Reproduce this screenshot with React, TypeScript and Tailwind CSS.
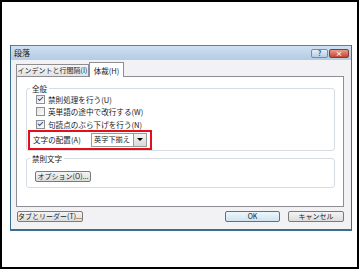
import { Check } from 'lucide-react';

const font = { fontFamily: '"Noto Sans CJK JP", "Liberation Sans", sans-serif' };

function CheckRow({ checked, label }: { checked: boolean; label: string }) {
  return (
    <div className="flex h-[12.5px] items-center gap-[3px] pl-[9px]">
      <span className="flex h-[9px] w-[9px] items-center justify-center border border-[#8e8f8f] bg-gradient-to-br from-[#e4e4e4] to-[#fbfbfb]">
        {checked && <Check size={8} strokeWidth={3.5} className="text-[#2a4a9a]" />}
      </span>
      <span className="whitespace-nowrap text-[7.6px] leading-[9px] text-[#1a1a1a]">{label}</span>
    </div>
  );
}

function Btn({ label, width, primary }: { label: string; width: string; primary?: boolean }) {
  return (
    <div
      className={`flex h-[11px] items-center justify-center whitespace-nowrap rounded-[2px] border bg-gradient-to-b text-[7px] leading-[9px] text-[#1a1a1a] ${width} ${
        primary ? 'border-[#3d7bad] from-[#eef6fb] to-[#cfe3f1]' : 'border-[#7a7a7a] from-[#f4f4f4] to-[#dcdcdc]'
      }`}
    >
      {label}
    </div>
  );
}

export default function App() {
  return (
    <div className="h-[270px] w-[360px] bg-white" style={font}>
      <div className="h-[269px] w-[359px] border-2 border-black pl-[8px] pt-[43px]">
        <div className="w-[342px] border-x border-b-2 border-[#39708f] bg-[#f2f1f4]">
          {/* title bar */}
          <div className="flex h-[15px] items-center justify-between border-t border-[#5b7f9c] bg-gradient-to-b from-[#cfe0f1] to-[#b3cbe5] pl-[3px] pr-[2px]">
            <span className="text-[8px] leading-[10px] text-[#1a1a1a]">段落</span>
            <div className="flex h-[9px] gap-[1px]">
              <div className="flex w-[17px] items-center justify-center rounded-[2px] border border-[#6f8fae] bg-gradient-to-b from-[#e4eef8] to-[#b6cde4] text-[7px] font-bold leading-none text-[#2f4f6f]">
                ?
              </div>
              <div className="flex w-[20px] items-center justify-center rounded-[2px] border border-[#8a3b30] bg-gradient-to-b from-[#e49a8c] to-[#c5442f] text-[7px] font-bold leading-none text-white">
                ×
              </div>
            </div>
          </div>

          {/* body */}
          <div className="pl-[5px] pr-[7px] pt-[2px]">
            <div className="flex h-[14px] items-end">
              <div className="flex h-[12px] w-[73px] items-center justify-center whitespace-nowrap border border-b-0 border-[#8c8e94] bg-gradient-to-b from-[#f6f6f6] to-[#e3e3e3] text-[7px] leading-[9px] text-[#1a1a1a]">
                インデントと行間隔(I)
              </div>
              <div className="relative z-10 mb-[-1px] flex h-[15px] w-[35px] items-center justify-center whitespace-nowrap border border-b-0 border-[#8c8e94] bg-white text-[7.5px] leading-[9px] text-[#1a1a1a]">
                体裁(H)
              </div>
            </div>

            <div className="h-[131px] border border-[#8c8e94] bg-white pl-[9px] pr-[8px] pt-[7px]">
              <fieldset className="rounded-[3px] border border-[#d5dde3]">
                <legend className="ml-[3px] px-[2px] text-[7.5px] leading-[9px] text-[#1a1a1a]">全般</legend>
                <CheckRow checked label="禁則処理を行う(U)" />
                <CheckRow checked={false} label="英単語の途中で改行する(W)" />
                <CheckRow checked label="句読点のぶら下げを行う(N)" />
                <div className="ml-[1px] mt-[-1px] flex h-[20px] w-[124px] items-center border-2 border-[#e3101a] pl-[3px]">
                  <span className="w-[58px] whitespace-nowrap text-[7.6px] leading-[9px] text-[#1a1a1a]">文字の配置(A)</span>
                  <div className="flex h-[14px] w-[56px] items-center border border-[#9a9a9a] bg-white">
                    <span className="flex-1 overflow-hidden whitespace-nowrap pl-[2px] text-[7.2px] leading-[9px] text-[#1a1a1a]">英字下揃え</span>
                    <div className="flex h-full w-[13px] shrink-0 items-center justify-center border-l border-[#9a9a9a] bg-gradient-to-b from-[#f3f3f3] to-[#d9d9d9]">
                      <span className="h-0 w-0 border-x-[3px] border-t-[3px] border-x-transparent border-t-black" />
                    </div>
                  </div>
                </div>
              </fieldset>

              <fieldset className="mt-[3px] rounded-[3px] border border-[#d5dde3] pb-[5px] pl-[8px] pt-[8px]">
                <legend className="ml-[-5px] px-[2px] text-[7.5px] leading-[9px] text-[#1a1a1a]">禁則文字</legend>
                <Btn label="オプション(O)..." width="w-[56px]" />
              </fieldset>
            </div>

            <div className="flex h-[22px] items-center pb-[3px] pl-[1px]">
              <Btn label="タブとリーダー(T)..." width="w-[66px]" />
              <div className="ml-auto flex gap-[8px]">
                <Btn label="OK" width="w-[55px]" primary />
                <Btn label="キャンセル" width="w-[56px]" />
              </div>
            </div>
          </div>
        </div>
      </div>
    </div>
  );
}
